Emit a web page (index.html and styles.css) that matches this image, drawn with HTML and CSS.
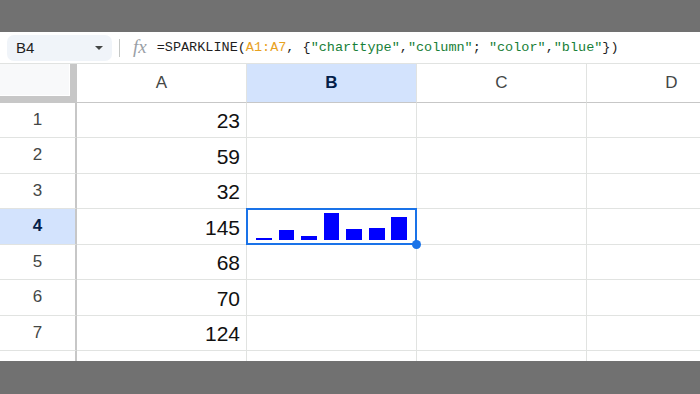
FILE: index.html
```html
<!DOCTYPE html>
<html lang="en">
<head>
    <meta charset="UTF-8">
    <meta name="viewport" content="width=device-width, initial-scale=1.0">
    <title>Sparkline Sheet</title>
    <link rel="stylesheet" href="styles.css">
</head>
<body>
    <div class="frame-bar"></div>

    <!-- Formula Bar -->
    <div class="formula-bar">
        <div class="name-box">
            <span>B4</span>
            <span class="caret"></span>
        </div>
        <div class="divider"></div>
        <span class="fx">fx</span>
        <div class="formula"><span class="f-plain">=SPARKLINE(</span><span class="f-range">A1:A7</span><span class="f-plain">, {</span><span class="f-str">"charttype"</span><span class="f-plain">,</span><span class="f-str">"column"</span><span class="f-plain">; </span><span class="f-str">"color"</span><span class="f-plain">,</span><span class="f-str">"blue"</span><span class="f-plain">})</span></div>
    </div>

    <!-- Grid -->
    <div class="sheet">
        <div class="corner"></div>
        <div class="col-head">A</div>
        <div class="col-head selected">B</div>
        <div class="col-head">C</div>
        <div class="col-head">D</div>

        <div class="row-head">1</div>
        <div class="cell num">23</div><div class="cell"></div><div class="cell"></div><div class="cell"></div>

        <div class="row-head">2</div>
        <div class="cell num">59</div><div class="cell"></div><div class="cell"></div><div class="cell"></div>

        <div class="row-head">3</div>
        <div class="cell num">32</div><div class="cell"></div><div class="cell"></div><div class="cell"></div>

        <div class="row-head selected">4</div>
        <div class="cell num">145</div>
        <div class="cell active">
            <div class="sparkline">
                <div class="bar" style="height: 1.8px"></div>
                <div class="bar" style="height: 9.2px"></div>
                <div class="bar" style="height: 3.7px"></div>
                <div class="bar" style="height: 27px"></div>
                <div class="bar" style="height: 11px"></div>
                <div class="bar" style="height: 11.5px"></div>
                <div class="bar" style="height: 22.7px"></div>
            </div>
            <span class="handle"></span>
        </div>
        <div class="cell"></div><div class="cell"></div>

        <div class="row-head">5</div>
        <div class="cell num">68</div><div class="cell"></div><div class="cell"></div><div class="cell"></div>

        <div class="row-head">6</div>
        <div class="cell num">70</div><div class="cell"></div><div class="cell"></div><div class="cell"></div>

        <div class="row-head">7</div>
        <div class="cell num">124</div><div class="cell"></div><div class="cell"></div><div class="cell"></div>

        <!-- row 8 is only partly visible, no label shown -->
        <div class="row-head"></div>
        <div class="cell"></div><div class="cell"></div><div class="cell"></div><div class="cell"></div>
    </div>

    <div class="frame-bar bottom"></div>
</body>
</html>
```

FILE: styles.css
```css
* {
    box-sizing: border-box;
}

html, body {
    margin: 0;
    padding: 0;
}

body {
    width: 700px;
    height: 394px;
    overflow: hidden;
    background: #fff;
    font-family: "Liberation Sans", Arial, sans-serif;
    display: flex;
    flex-direction: column;
}

.frame-bar {
    height: 32px;
    flex: none;
    background: #717171;
}

.frame-bar.bottom {
    height: 33px;
}

/* Formula bar */
.formula-bar {
    height: 31px;
    flex: none;
    display: flex;
    align-items: center;
    padding-left: 7px;
    background: #fff;
}

.name-box {
    width: 105px;
    height: 26px;
    background: #f0f4f9;
    border-radius: 7px;
    display: flex;
    align-items: center;
    justify-content: space-between;
    padding: 0 9px 0 9px;
    font-size: 15px;
    color: #1f1f1f;
}

.caret {
    width: 0;
    height: 0;
    border-left: 4px solid transparent;
    border-right: 4px solid transparent;
    border-top: 4px solid #444746;
}

.divider {
    width: 1px;
    height: 18px;
    background: #c4c7c5;
    margin: 0 13px 0 7px;
}

.fx {
    font-family: "Liberation Serif", serif;
    font-style: italic;
    font-size: 19px;
    color: #9aa0a6;
    margin-right: 10px;
    margin-top: -2px;
}

.formula {
    font-family: "Liberation Mono", "DejaVu Sans Mono", monospace;
    font-size: 13.5px;
    white-space: nowrap;
    color: #1f1f1f;
}

.f-range {
    color: #e8a21f;
}

.f-str {
    color: #188038;
}

/* Sheet grid */
.sheet {
    flex: none;
    height: 298px;
    overflow: hidden;
    display: grid;
    grid-template-columns: 77px 170px 170px 170px 170px;
    grid-template-rows: 38.5px repeat(8, 35.5px);
    border-top: 1px solid #e1e3e1;
}

.corner {
    background: #f8f9fa;
    border-right: 7px solid #c7c7c7;
    border-bottom: 7px solid #c7c7c7;
    box-shadow: inset -1px -1px 0 #fff;
}

.col-head {
    display: flex;
    align-items: center;
    justify-content: center;
    font-size: 17px;
    color: #444746;
    background: #fff;
    border-right: 1px solid #e1e3e1;
    border-bottom: 1px solid #c7c7c7;
}

.row-head {
    display: flex;
    align-items: center;
    justify-content: center;
    font-size: 17px;
    color: #444746;
    background: #fff;
    border-right: 2px solid #c7c7c7;
    border-bottom: 1px solid #e1e3e1;
}

.col-head.selected,
.row-head.selected {
    background: #d3e3fd;
    color: #041e49;
    font-weight: bold;
}

.cell {
    border-right: 1px solid #e1e3e1;
    border-bottom: 1px solid #e1e3e1;
    position: relative;
}

.cell.num {
    display: flex;
    align-items: center;
    justify-content: flex-end;
    padding-right: 6px;
    padding-top: 3px;
    font-size: 21px;
    color: #111;
}

/* Active cell with sparkline */
.cell.active::after {
    content: "";
    position: absolute;
    left: -1px;
    top: -1px;
    right: -1px;
    bottom: -1px;
    border: 2px solid #1a73e8;
    pointer-events: none;
}

.sparkline {
    height: 100%;
    display: flex;
    align-items: flex-end;
    gap: 6.6px;
    padding: 0 9px 4px 9px;
}

.bar {
    flex: 1;
    background: #0000ff;
}

.handle {
    position: absolute;
    right: -5px;
    bottom: -5px;
    width: 9px;
    height: 9px;
    border-radius: 50%;
    background: #1a73e8;
    z-index: 2;
}
```
